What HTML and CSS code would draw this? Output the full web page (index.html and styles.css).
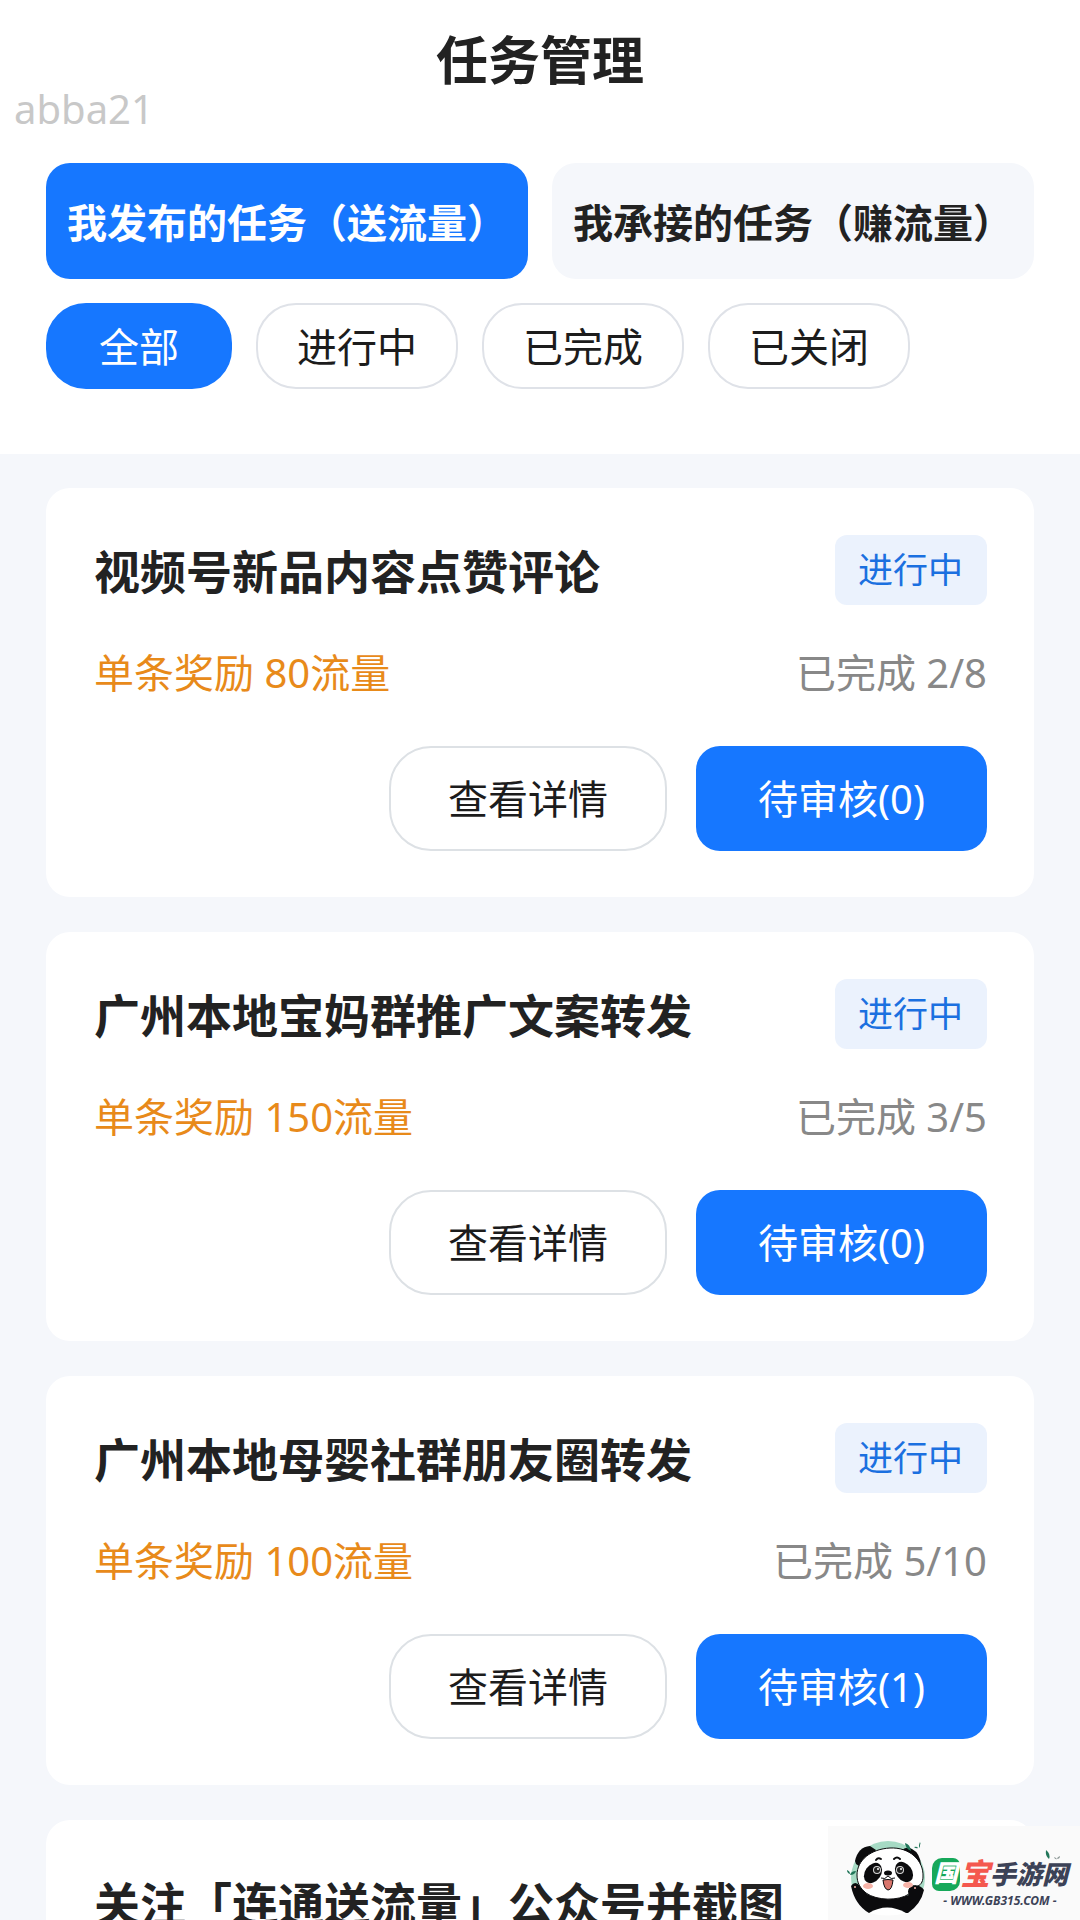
FILE: index.html
```html
<!DOCTYPE html>
<html lang="zh-CN">
<head>
	<meta charset="utf-8">
	<meta name="viewport" content="width=device-width, initial-scale=1">
	<title>任务管理</title>
	<link rel="stylesheet" href="styles.css">
</head>
<body>
	<header class="header">
		<h1 class="title">任务管理</h1>
		<p class="user">abba21</p>
		<nav class="tabs">
			<button class="tab active">我发布的任务（送流量）</button>
			<button class="tab">我承接的任务（赚流量）</button>
		</nav>
		<div class="filters">
			<button class="filter active">全部</button>
			<button class="filter">进行中</button>
			<button class="filter">已完成</button>
			<button class="filter">已关闭</button>
		</div>
	</header>

	<main class="list">
		<section class="card">
			<div class="card-top">
				<h2>视频号新品内容点赞评论</h2>
				<span class="badge">进行中</span>
			</div>
			<div class="card-info">
				<span class="reward">单条奖励 80流量</span>
				<span class="done">已完成 2/8</span>
			</div>
			<div class="card-btns">
				<button class="btn">查看详情</button>
				<button class="btn btn-blue">待审核(0)</button>
			</div>
		</section>
		<section class="card">
			<div class="card-top">
				<h2>广州本地宝妈群推广文案转发</h2>
				<span class="badge">进行中</span>
			</div>
			<div class="card-info">
				<span class="reward">单条奖励 150流量</span>
				<span class="done">已完成 3/5</span>
			</div>
			<div class="card-btns">
				<button class="btn">查看详情</button>
				<button class="btn btn-blue">待审核(0)</button>
			</div>
		</section>
		<section class="card">
			<div class="card-top">
				<h2>广州本地母婴社群朋友圈转发</h2>
				<span class="badge">进行中</span>
			</div>
			<div class="card-info">
				<span class="reward">单条奖励 100流量</span>
				<span class="done">已完成 5/10</span>
			</div>
			<div class="card-btns">
				<button class="btn">查看详情</button>
				<button class="btn btn-blue">待审核(1)</button>
			</div>
		</section>
		<section class="card">
			<div class="card-top">
				<h2>关注「连通送流量」公众号并截图</h2>
			</div>
		</section>
	</main>

	<!-- 右下角站点标识 -->
	<aside class="site">
		<svg class="panda" viewBox="0 0 90 85" aria-hidden="true">
			<circle cx="48" cy="43" r="37" fill="#a6dac4"/>
			<path d="M15 26Q18 12 30 11L36 15 22 33 16 29Z" fill="#0b0b0d"/>
			<path d="M62 15Q67 11 72 14 80 18 81 30L76 33Z" fill="#0b0b0d"/>
			<!-- 身体和手 -->
			<path d="M11 51Q15 45 20 51L27 59Q48 67 69 60 67 53 73 51 80 49 84 55 81 69 68 78H29Q15 70 11 51Z" fill="#0b0b0d"/>
			<path d="M29 78Q47 67 66 78Q48 83 29 78Z" fill="#fff"/>
			<!-- 头 -->
			<path d="M50 13C69 12 84 25 83 42 83 47 80 51 77 51 71 49 67 55 69 59 59 66 37 66 26 58 20 53 17 48 17 40 17 25 31 14 50 13Z" fill="#fff" stroke="#0b0b0d" stroke-width="1"/>
			<path d="M36 25Q38 22 41 24M54 24Q57 21 60 24" fill="none" stroke="#0b0b0d" stroke-width="2" stroke-linecap="round"/>
			<ellipse cx="33" cy="38" rx="8" ry="11" transform="rotate(35 33 38)" fill="#0b0b0d"/>
			<ellipse cx="64" cy="37" rx="8" ry="11" transform="rotate(-35 64 37)" fill="#0b0b0d"/>
			<circle cx="37" cy="35" r="4" fill="#d8d8d8"/>
			<circle cx="60" cy="35" r="4" fill="#d8d8d8"/>
			<circle cx="37" cy="35" r="3" fill="#222"/>
			<circle cx="60" cy="35" r="3" fill="#222"/>
			<circle cx="38" cy="34" r="1" fill="#fff"/>
			<circle cx="61" cy="34" r="1" fill="#fff"/>
			<ellipse cx="48" cy="38" rx="4" ry="2.5" fill="#0b0b0d"/>
			<path d="M41 43Q45 45 48 41 51 45 55 43" fill="none" stroke="#0b0b0d"/>
			<path d="M43 45Q48 44 53 45 52 55 48 55 44 54 43 45Z" fill="#d9756c" stroke="#0b0b0d"/>
			<ellipse cx="28" cy="51" rx="5" ry="3" fill="#f7b3a8"/>
			<ellipse cx="68" cy="50" rx="5" ry="3" fill="#f7b3a8"/>
			<circle cx="75" cy="53" r="1" fill="#f7b3a8"/>
			<circle cx="15" cy="52" r="1" fill="#f7b3a8"/>
			<!-- 竹叶 -->
			<path d="M10 40Q15 40 16 36 11 36 10 40ZM10 39Q10 36 7 35 7 38 10 39ZM65 8Q70 9 71 16 65 13 65 8ZM80 10Q81 9 80 7 78 11 80 13ZM74 12Q76 14 78 13 77 11 74 12Z" fill="#22765a"/>
		</svg>
		<div class="site-text">
			<p class="site-name"><b class="guo">国</b><b class="bao">宝</b><b>手游网</b></p>
			<p class="site-url">- WWW.GB315.COM -</p>
		</div>
		<svg class="leaf" viewBox="0 0 16 12" aria-hidden="true">
			<path d="M1 0Q6 4 4 9 0 6 1 0Z" fill="#22765a"/>
			<path d="M9 7Q10 10 12 9 10 7 9 7ZM12 9Q15 9 15 6 12 7 12 9Z" fill="#8f9a98"/>
		</svg>
	</aside>
</body>
</html>
```
FILE: styles.css
```css
* {
	margin: 0;
	padding: 0;
	box-sizing: border-box;
}

body {
	height: 100vh;
	overflow: hidden;
	background: #f5f7fb;
	color: #222;
	font-family: "Noto Sans", "Noto Sans CJK SC", sans-serif;
	font-size: 40px;
}

button {
	font: inherit;
	color: #1c1c1c;
	background: #fff;
	border: 0;
	white-space: nowrap;
}

.header {
	padding: 28px 46px 65px;
	background: #fff;
}

.title {
	font-size: 52px;
	line-height: 64px;
	text-align: center;
}

.user {
	margin-left: -32px;
	line-height: 34px;
	color: #c8c8c8;
}

.tabs {
	display: flex;
	gap: 24px;
	margin-top: 37px;
}

.tab {
	flex: 1;
	height: 116px;
	border-radius: 24px;
	background: #f5f7fb;
	color: #222;
	font-weight: bold;
}

.filters {
	display: flex;
	gap: 24px;
	margin-top: 24px;
}

.filter {
	height: 86px;
	padding: 0 39px 3px;
	border: 2px solid #dfe2e8;
	border-radius: 40px;
}

.filter.active {
	padding: 0 51px 3px;
	border-color: #1677ff;
}

.active {
	background: #1677ff;
	color: #fff;
}

.list {
	display: flex;
	flex-direction: column;
	gap: 35px;
	padding: 34px 46px;
}

.card {
	padding: 47px 47px 46px 48px;
	border-radius: 24px;
	background: #fff;
}

.card-top,
.card-info {
	display: flex;
	justify-content: space-between;
	align-items: center;
}

.card-top {
	height: 70px;
}

.card-top h2 {
	padding-bottom: 3px;
	font-size: 46px;
	white-space: nowrap;
}

.badge {
	padding: 0 24px 0 23px;
	border-radius: 12px;
	background: #ebf2fd;
	color: #1b70e0;
	font-size: 35px;
	line-height: 70px;
}

.card-info {
	margin: 38px 0 43px;
	line-height: 60px;
}

.reward {
	color: #e88a1a;
}

.done {
	color: #888;
}

.card-btns {
	display: flex;
	justify-content: flex-end;
	gap: 29px;
}

.btn {
	height: 105px;
	padding: 0 57px 3px;
	border: 2px solid #dde1e5;
	border-radius: 42px;
}

.btn-blue {
	padding: 0 62px 3px;
	border: 0;
	border-radius: 24px;
	background: #1677ff;
	color: #fff;
}

/* 站点标识 */
.site {
	position: fixed;
	right: 0;
	bottom: 0;
	display: flex;
	gap: 2px;
	padding: 9px 12px 0;
	background: #fafafa;
	color: #3c4257;
}

.panda {
	width: 90px;
	height: 85px;
}

.site-text {
	padding-top: 22px;
}

.site-name {
	display: flex;
	align-items: center;
	height: 34px;
	font-size: 26px;
	font-style: italic;
	font-weight: 900;
	line-height: 32px;
}

.guo {
	width: 28px;
	height: 33px;
	border-radius: 10px 7px;
	background: #16a85a;
	color: #fff;
	font-size: 24px;
	line-height: 30px;
	text-align: center;
}

.bao {
	color: #f4584f;
	font-size: 30px;
}

.site-url {
	font-size: 12px;
	font-style: italic;
	font-weight: bold;
	line-height: 20px;
	text-align: center;
}

.leaf {
	position: absolute;
	top: 24px;
	right: 19px;
	width: 16px;
	height: 12px;
}
```
